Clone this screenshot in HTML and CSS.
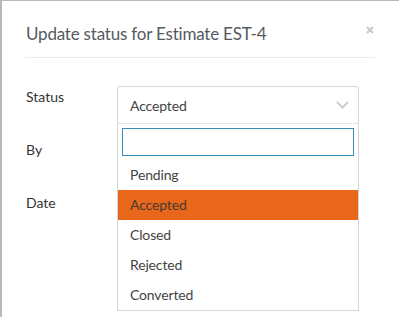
FILE: index.html
```html
<!DOCTYPE html>
<html lang="en">
  <head>
    <meta charset="UTF-8" />
    <title>Update status</title>
    <link rel="stylesheet" href="styles.css">
  </head>
  <body>
    <div class="modal">
      <div class="modal-header">
        <h4 class="modal-title">Update status for Estimate EST-4</h4>
        <button class="close-btn" aria-label="Close">
          <svg width="8" height="8" viewBox="0 0 8 8">
            <path d="M1 1 L7 7 M7 1 L1 7" stroke="#c9c9c9" stroke-width="2" />
          </svg>
        </button>
      </div>

      <div class="modal-body">
        <div class="form-row">
          <label class="form-label">Status</label>
          <div class="field">
            <div class="select-box">
              <span class="select-value">Accepted</span>
              <svg class="chevron" width="13" height="8" viewBox="0 0 13 8">
                <path d="M1 1 L6.5 6.5 L12 1" fill="none" stroke="#cfcfcf" stroke-width="2.2" />
              </svg>
            </div>
            <div class="dropdown">
              <input type="text" class="dropdown-search" />
              <ul class="options">
                <li>Pending</li>
                <li class="highlighted">Accepted</li>
                <li>Closed</li>
                <li>Rejected</li>
                <li>Converted</li>
              </ul>
            </div>
          </div>
        </div>

        <div class="form-row">
          <label class="form-label">By</label>
          <div class="field">
            <input type="text" class="text-input" />
          </div>
        </div>

        <div class="form-row">
          <label class="form-label">Date</label>
          <div class="field">
            <input type="text" class="text-input" />
          </div>
        </div>
      </div>
    </div>
  </body>
</html>
```

FILE: styles.css
```css
body {
  margin: 0;
  font-family: Lato, "Liberation Sans", sans-serif;
  background: #fff;
  color: #333;
  overflow: hidden;
}

.modal {
  height: 100vh;
  box-sizing: border-box;
  border-top: 1px solid #b8b8b8;
  border-left: 2px solid #b8b8b8;
}

.modal-header {
  display: flex;
  justify-content: space-between;
  align-items: flex-start;
  margin: 0 24px 0 23px;
  padding: 20px 0 10px 1px;
  border-bottom: 1px solid #ececec;
}

.modal-title {
  margin: 0;
  font-size: 17px;
  letter-spacing: -0.2px;
  line-height: 26px;
  font-weight: normal;
  color: #555a5f;
}

.close-btn {
  border: none;
  background: none;
  padding: 0;
  margin: 5px 1px 0 0;
  width: 8px;
  height: 8px;
  display: flex;
  cursor: pointer;
}

.modal-body {
  padding: 28px 40px 0 24px;
}

.form-row {
  display: flex;
  margin-bottom: 15px;
}

.form-label {
  width: 91px;
  padding-top: 1px;
  font-size: 14px;
  line-height: 20px;
  color: #333;
}

.field {
  position: relative;
  width: 242px;
}

.select-box {
  height: 38px;
  box-sizing: border-box;
  border: 1px solid #d2d6de;
  border-radius: 3px;
  display: flex;
  align-items: center;
  justify-content: space-between;
  padding: 0 9px 0 12px;
  font-size: 14px;
  letter-spacing: -0.15px;
  color: #444;
}

.text-input {
  width: 100%;
  height: 38px;
  box-sizing: border-box;
  border: 1px solid #d2d6de;
  border-radius: 3px;
}

/* выпадающий список поверх формы */
.dropdown {
  position: absolute;
  top: 37px;
  left: 0;
  right: 0;
  z-index: 2;
  background: #fff;
  border: 1px solid #d2d6de;
  border-top: 1px solid #e4e6ea;
  padding-top: 4px;
}

.dropdown-search {
  display: block;
  box-sizing: border-box;
  width: 232px;
  height: 28px;
  margin: 0 0 4px 4px;
  border: 1px solid #3c8dbc;
  outline: none;
}

.options {
  list-style: none;
  margin: 0;
  padding: 0;
}

.options li {
  height: 30px;
  line-height: 30px;
  padding: 0 12px;
  font-size: 14px;
  letter-spacing: -0.15px;
  color: #444;
}

.options li.highlighted {
  background: #e8671a;
  color: #4a3a30;
}
```
